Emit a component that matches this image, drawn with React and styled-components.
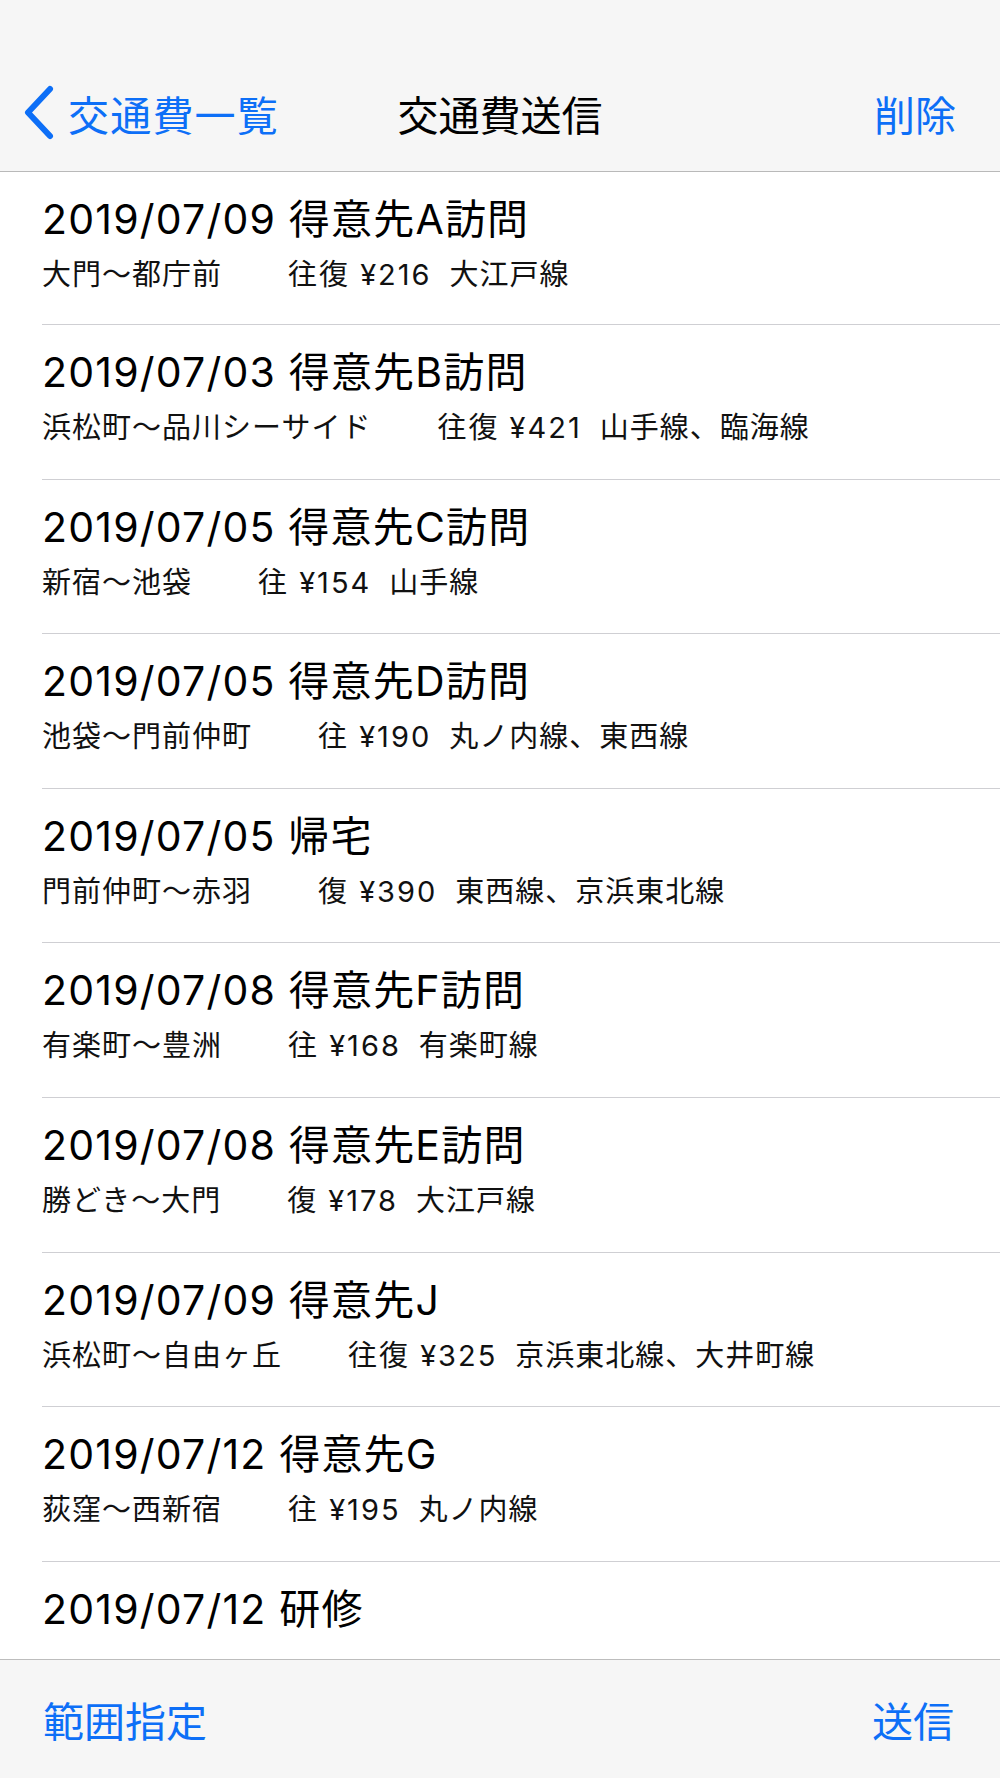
import React from "react";
import styled, { createGlobalStyle } from "styled-components";

const GlobalStyle = createGlobalStyle`
  html, body {
    margin: 0;
    padding: 0;
    background: #fff;
  }
  body {
    font-family: Inter, "Noto Sans CJK JP", "Noto Sans", sans-serif;
    color: #000;
  }
`;

const Page = styled.div`
  width: 1000px;
  height: 1778px;
  display: flex;
  flex-direction: column;
  overflow: hidden;
`;

const NavBar = styled.header`
  flex: none;
  box-sizing: border-box;
  height: 172px;
  padding-top: 56px;
  background: #f6f6f6;
  border-bottom: 1px solid #b9b9b9;
`;

const NavRow = styled.div`
  height: 114px;
  display: grid;
  grid-template-columns: 1fr auto 1fr;
  align-items: center;
`;

const BackButton = styled.div`
  display: flex;
  align-items: center;
  gap: 10px;
  padding-left: 18px;
  color: #0d6ff7;
  font-size: 41px;
  letter-spacing: 1.2px;
`;

const NavTitle = styled.div`
  font-size: 41px;
  color: #000;
`;

const NavAction = styled.div`
  justify-self: end;
  padding-right: 44px;
  font-size: 41px;
  color: #0d6ff7;
`;

const List = styled.div`
  flex: 1;
  overflow: hidden;
`;

const Row = styled.div`
  padding-left: 42px;
`;

const RowInner = styled.div`
  box-sizing: border-box;
  height: ${(p) => (p.$first ? 153 : 154.6)}px;
  padding-top: 23px;
  border-bottom: 1px solid #cfcfd3;
`;

const Title = styled.div`
  font-size: 41px;
  line-height: 48px;
  letter-spacing: 1.2px;
  white-space: nowrap;
`;

const Sub = styled.div`
  margin-top: 14px;
  font-size: 29px;
  line-height: 36px;
  letter-spacing: 1px;
  white-space: nowrap;
  color: #111;
`;

const Fare = styled.span`
  margin-left: 66px;
  letter-spacing: 2px;
`;

const Lines = styled.span`
  margin-left: 18px;
`;

const Toolbar = styled.footer`
  flex: none;
  box-sizing: border-box;
  height: 119px;
  border-top: 1px solid #bdbdbd;
  background: #f6f6f6;
  display: flex;
  align-items: center;
  justify-content: space-between;
  padding: 0 46px 0 43px;
`;

const ToolButton = styled.div`
  font-size: 41px;
  color: #0d6ff7;
`;

const Chevron = () => (
  <svg width="40" height="60" viewBox="0 0 40 60">
    <path
      d="M32 6 L10 29.5 L32 53"
      fill="none"
      stroke="#0d6ff7"
      strokeWidth="6"
      strokeLinecap="round"
      strokeLinejoin="round"
    />
  </svg>
);

const items = [
  { title: "2019/07/09 得意先A訪問", route: "大門〜都庁前", fare: "往復 ¥216", lines: "大江戸線" },
  { title: "2019/07/03 得意先B訪問", route: "浜松町〜品川シーサイド", fare: "往復 ¥421", lines: "山手線、臨海線" },
  { title: "2019/07/05 得意先C訪問", route: "新宿〜池袋", fare: "往 ¥154", lines: "山手線" },
  { title: "2019/07/05 得意先D訪問", route: "池袋〜門前仲町", fare: "往 ¥190", lines: "丸ノ内線、東西線" },
  { title: "2019/07/05 帰宅", route: "門前仲町〜赤羽", fare: "復 ¥390", lines: "東西線、京浜東北線" },
  { title: "2019/07/08 得意先F訪問", route: "有楽町〜豊洲", fare: "往 ¥168", lines: "有楽町線" },
  { title: "2019/07/08 得意先E訪問", route: "勝どき〜大門", fare: "復 ¥178", lines: "大江戸線" },
  { title: "2019/07/09 得意先J", route: "浜松町〜自由ヶ丘", fare: "往復 ¥325", lines: "京浜東北線、大井町線" },
  { title: "2019/07/12 得意先G", route: "荻窪〜西新宿", fare: "往 ¥195", lines: "丸ノ内線" },
  { title: "2019/07/12 研修", route: "", fare: "", lines: "" },
];

const App = () => {
  return (
    <Page>
      <GlobalStyle />
      <NavBar>
        <NavRow>
          <BackButton>
            <Chevron />
            <span>交通費一覧</span>
          </BackButton>
          <NavTitle>交通費送信</NavTitle>
          <NavAction>削除</NavAction>
        </NavRow>
      </NavBar>
      <List>
        {items.map((item, i) => (
          <Row key={i}>
            <RowInner $first={i === 0}>
              <Title>{item.title}</Title>
              {item.route && (
                <Sub>
                  {item.route}
                  <Fare>{item.fare}</Fare>
                  <Lines>{item.lines}</Lines>
                </Sub>
              )}
            </RowInner>
          </Row>
        ))}
      </List>
      <Toolbar>
        <ToolButton>範囲指定</ToolButton>
        <ToolButton>送信</ToolButton>
      </Toolbar>
    </Page>
  );
};

export default App;
